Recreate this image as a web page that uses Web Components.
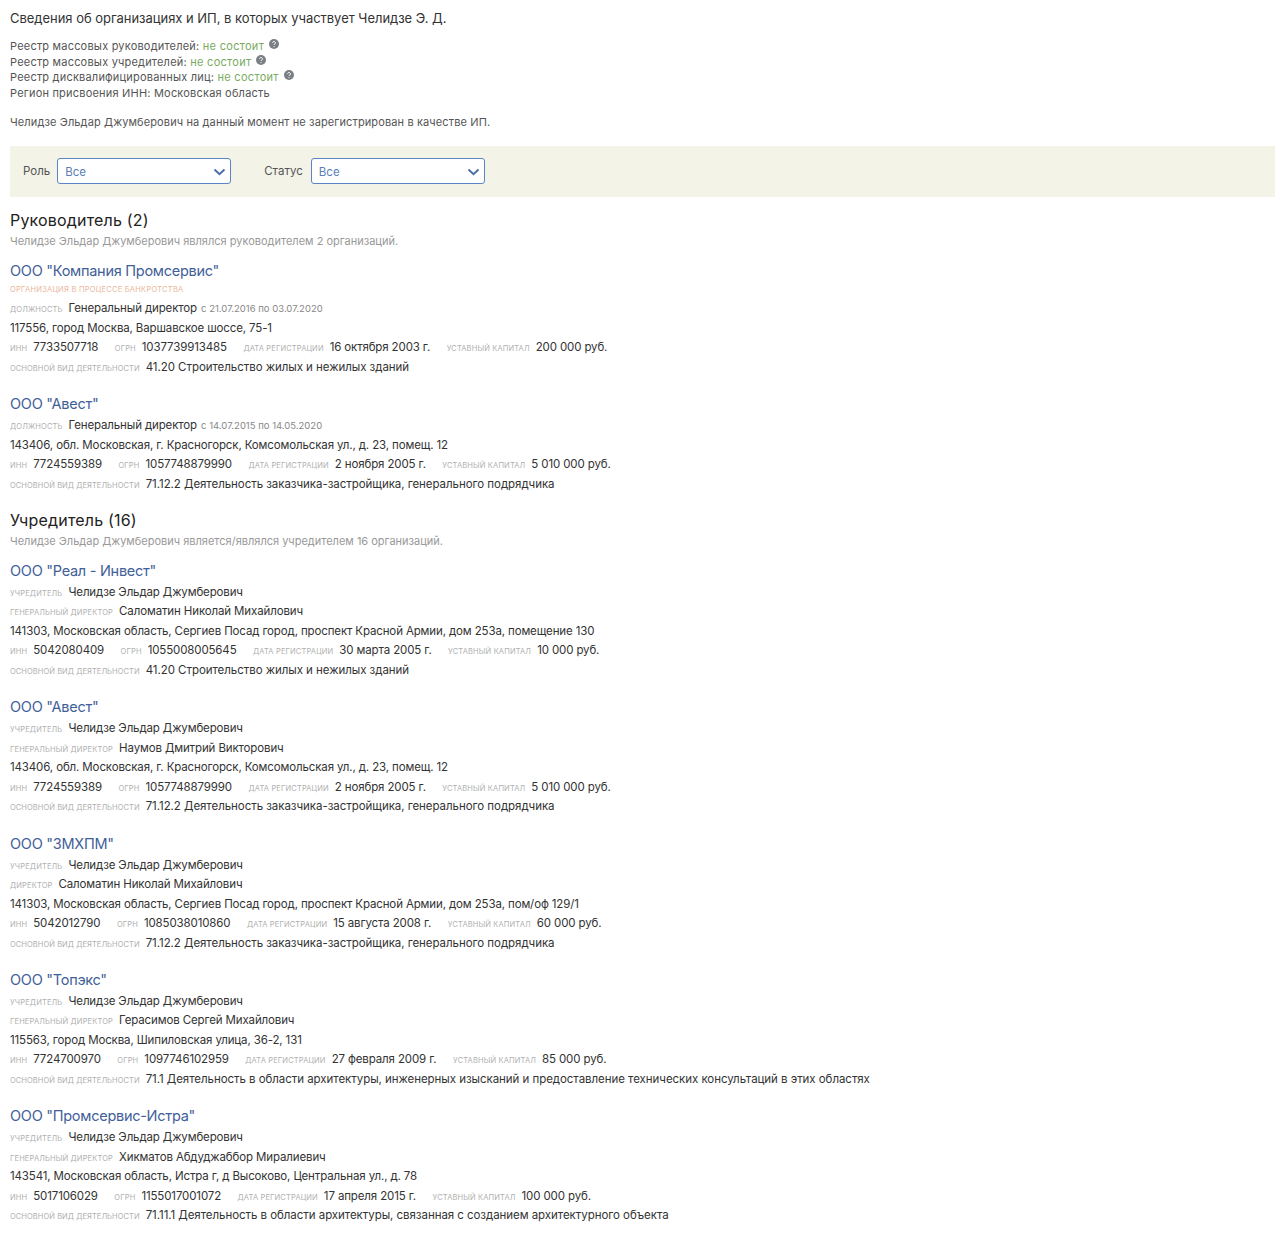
<!DOCTYPE html>
<html lang="ru"><head><meta charset="utf-8"><title>Челидзе</title>
<style>
html,body{margin:0;background:#fff}
body{font:12px/19.5px Inter,Roboto,"Liberation Sans",sans-serif;color:#333}
</style></head><body>
<template id="t-page"><style>
:host{display:block;padding:10px 5px 0 10px}
</style><slot></slot></template>
<template id="t-title"><style>
:host{display:block;font-size:13px;line-height:16px;height:16px;color:#333;letter-spacing:-.03px}
</style><slot></slot></template>
<template id="t-info"><style>
:host{display:block;margin-top:13px;font-size:11px;line-height:15.6px;color:#555;letter-spacing:.2px}
</style><slot></slot></template>
<template id="t-yes"><style>
:host{color:#7aab62;letter-spacing:.3px}
svg{display:inline-block;width:10px;height:10px;margin-left:5px;vertical-align:1px}
</style><slot></slot><svg viewBox="0 0 10 10"><circle cx="5" cy="5" r="5" fill="#7b7f86"/><path d="M3.6 3.9a1.4 1.4 0 1 1 2.2 1.1c-.5.3-.8.5-.8 1M5 7.2v.9" fill="none" stroke="#fff" stroke-width="1"/></svg></template>
<template id="t-note"><style>
:host{display:block;margin-top:14px;font-size:11px;line-height:15px;color:#555;letter-spacing:.12px}
</style><slot></slot></template>
<template id="t-filters"><style>
:host{display:flex;align-items:center;gap:33px;height:50px;padding-bottom:1px;margin-top:16px;padding-left:13px;background:#f3f3e8}
</style><slot></slot></template>
<template id="t-select"><style>
:host{display:flex;align-items:center;gap:var(--g,7px);font-size:11.5px;color:#555}
.box{box-sizing:border-box;width:174px;height:26px;display:flex;align-items:center;justify-content:space-between;padding:2px 4px 0 7px;background:#fff;border:1px solid #5b84c4;border-radius:3px;color:#5b7fb8}
svg{width:13px;height:8px}
</style><span><slot name="label"></slot></span><div class="box"><slot></slot><svg viewBox="0 0 13 8"><path d="M1.5 1.5 6.5 6.2l5-4.7" fill="none" stroke="#4d6fa6" stroke-width="2"/></svg></div></template>
<template id="t-section"><style>
:host{display:block;margin-top:var(--top,12px)}
h2{margin:0;font-weight:400;font-size:16px;line-height:22px;color:#222;letter-spacing:.18px}
p{margin:0;font-size:11px;line-height:20px;color:#999;letter-spacing:0}
</style><h2><slot name="head"></slot></h2><p><slot name="sub"></slot></p><slot></slot></template>
<template id="t-org"><style>
:host{display:block;margin-top:7px;padding-bottom:6.8px}
.n{font-size:14.5px;line-height:25px;height:25px;color:#3f6098;letter-spacing:-.27px}
</style><div class="n"><slot name="name"></slot></div><slot></slot></template>
<template id="t-row"><style>
:host{display:flex;gap:16.5px;height:19.5px;line-height:19.5px;font-size:11.5px;color:#333;letter-spacing:-.13px;white-space:nowrap}
</style><slot></slot></template>
<template id="t-field"><style>
:host{display:inline-block}
:host([act]){letter-spacing:-.05px}
b{font-weight:400;font-size:7.5px;text-transform:uppercase;color:#b0b0b0;margin-right:6px;letter-spacing:.15px}
:host([act]) b{letter-spacing:.07px}
</style><b><slot name="k"></slot></b><slot></slot></template>
<template id="t-status"><style>
:host{display:block;height:16px;line-height:14.5px;font-size:7.5px;text-transform:uppercase;color:#ebb79d;letter-spacing:.25px}
</style><slot></slot></template>
<template id="t-dates"><style>
:host{font-size:9.5px;color:#888;margin-left:1px;letter-spacing:0}
</style><slot></slot></template>

<x-page>
<x-title>Сведения об организациях и ИП, в которых участвует Челидзе Э. Д.</x-title>
<x-info>Реестр массовых руководителей: <x-yes>не состоит</x-yes><br>Реестр массовых учредителей: <x-yes>не состоит</x-yes><br>Реестр дисквалифицированных лиц: <x-yes>не состоит</x-yes><br>Регион присвоения ИНН: Московская область</x-info>
<x-note>Челидзе Эльдар Джумберович на данный момент не зарегистрирован в качестве ИП.</x-note>
<x-filters><x-select><span slot="label">Роль</span>Все</x-select><x-select style="--g:8px"><span slot="label">Статус</span>Все</x-select></x-filters>

<x-section><span slot="head">Руководитель (2)</span><span slot="sub">Челидзе Эльдар Джумберович являлся руководителем 2 организаций.</span>
<x-org><span slot="name">ООО "Компания Промсервис"</span>
<x-status>Организация в процессе банкротства</x-status>
<x-row><x-field><span slot="k">должность</span>Генеральный директор <x-dates>с 21.07.2016 по 03.07.2020</x-dates></x-field></x-row>
<x-row>117556, город Москва, Варшавское шоссе, 75-1</x-row>
<x-row><x-field><span slot="k">ИНН</span>7733507718</x-field><x-field><span slot="k">ОГРН</span>1037739913485</x-field><x-field><span slot="k">Дата регистрации</span>16 октября 2003 г.</x-field><x-field><span slot="k">Уставный капитал</span>200 000 руб.</x-field></x-row>
<x-row><x-field act><span slot="k">Основной вид деятельности</span>41.20 Строительство жилых и нежилых зданий</x-field></x-row>
</x-org>
<x-org><span slot="name">ООО "Авест"</span>
<x-row><x-field><span slot="k">должность</span>Генеральный директор <x-dates>с 14.07.2015 по 14.05.2020</x-dates></x-field></x-row>
<x-row>143406, обл. Московская, г. Красногорск, Комсомольская ул., д. 23, помещ. 12</x-row>
<x-row><x-field><span slot="k">ИНН</span>7724559389</x-field><x-field><span slot="k">ОГРН</span>1057748879990</x-field><x-field><span slot="k">Дата регистрации</span>2 ноября 2005 г.</x-field><x-field><span slot="k">Уставный капитал</span>5 010 000 руб.</x-field></x-row>
<x-row><x-field act><span slot="k">Основной вид деятельности</span>71.12.2 Деятельность заказчика-застройщика, генерального подрядчика</x-field></x-row>
</x-org>
</x-section>

<x-section style="--top:8px"><span slot="head">Учредитель (16)</span><span slot="sub">Челидзе Эльдар Джумберович является/являлся учредителем 16 организаций.</span>
<x-org><span slot="name">ООО "Реал - Инвест"</span>
<x-row><x-field><span slot="k">Учредитель</span>Челидзе Эльдар Джумберович</x-field></x-row>
<x-row><x-field><span slot="k">Генеральный директор</span>Саломатин Николай Михайлович</x-field></x-row>
<x-row>141303, Московская область, Сергиев Посад город, проспект Красной Армии, дом 253а, помещение 130</x-row>
<x-row><x-field><span slot="k">ИНН</span>5042080409</x-field><x-field><span slot="k">ОГРН</span>1055008005645</x-field><x-field><span slot="k">Дата регистрации</span>30 марта 2005 г.</x-field><x-field><span slot="k">Уставный капитал</span>10 000 руб.</x-field></x-row>
<x-row><x-field act><span slot="k">Основной вид деятельности</span>41.20 Строительство жилых и нежилых зданий</x-field></x-row>
</x-org>
<x-org><span slot="name">ООО "Авест"</span>
<x-row><x-field><span slot="k">Учредитель</span>Челидзе Эльдар Джумберович</x-field></x-row>
<x-row><x-field><span slot="k">Генеральный директор</span>Наумов Дмитрий Викторович</x-field></x-row>
<x-row>143406, обл. Московская, г. Красногорск, Комсомольская ул., д. 23, помещ. 12</x-row>
<x-row><x-field><span slot="k">ИНН</span>7724559389</x-field><x-field><span slot="k">ОГРН</span>1057748879990</x-field><x-field><span slot="k">Дата регистрации</span>2 ноября 2005 г.</x-field><x-field><span slot="k">Уставный капитал</span>5 010 000 руб.</x-field></x-row>
<x-row><x-field act><span slot="k">Основной вид деятельности</span>71.12.2 Деятельность заказчика-застройщика, генерального подрядчика</x-field></x-row>
</x-org>
<x-org><span slot="name">ООО "ЗМХПМ"</span>
<x-row><x-field><span slot="k">Учредитель</span>Челидзе Эльдар Джумберович</x-field></x-row>
<x-row><x-field><span slot="k">Директор</span>Саломатин Николай Михайлович</x-field></x-row>
<x-row>141303, Московская область, Сергиев Посад город, проспект Красной Армии, дом 253а, пом/оф 129/1</x-row>
<x-row><x-field><span slot="k">ИНН</span>5042012790</x-field><x-field><span slot="k">ОГРН</span>1085038010860</x-field><x-field><span slot="k">Дата регистрации</span>15 августа 2008 г.</x-field><x-field><span slot="k">Уставный капитал</span>60 000 руб.</x-field></x-row>
<x-row><x-field act><span slot="k">Основной вид деятельности</span>71.12.2 Деятельность заказчика-застройщика, генерального подрядчика</x-field></x-row>
</x-org>
<x-org><span slot="name">ООО "Топэкс"</span>
<x-row><x-field><span slot="k">Учредитель</span>Челидзе Эльдар Джумберович</x-field></x-row>
<x-row><x-field><span slot="k">Генеральный директор</span>Герасимов Сергей Михайлович</x-field></x-row>
<x-row>115563, город Москва, Шипиловская улица, 36-2, 131</x-row>
<x-row><x-field><span slot="k">ИНН</span>7724700970</x-field><x-field><span slot="k">ОГРН</span>1097746102959</x-field><x-field><span slot="k">Дата регистрации</span>27 февраля 2009 г.</x-field><x-field><span slot="k">Уставный капитал</span>85 000 руб.</x-field></x-row>
<x-row><x-field act><span slot="k">Основной вид деятельности</span>71.1 Деятельность в области архитектуры, инженерных изысканий и предоставление технических консультаций в этих областях</x-field></x-row>
</x-org>
<x-org><span slot="name">ООО "Промсервис-Истра"</span>
<x-row><x-field><span slot="k">Учредитель</span>Челидзе Эльдар Джумберович</x-field></x-row>
<x-row><x-field><span slot="k">Генеральный директор</span>Хикматов Абдуджаббор Миралиевич</x-field></x-row>
<x-row>143541, Московская область, Истра г, д Высоково, Центральная ул., д. 78</x-row>
<x-row><x-field><span slot="k">ИНН</span>5017106029</x-field><x-field><span slot="k">ОГРН</span>1155017001072</x-field><x-field><span slot="k">Дата регистрации</span>17 апреля 2015 г.</x-field><x-field><span slot="k">Уставный капитал</span>100 000 руб.</x-field></x-row>
<x-row><x-field act><span slot="k">Основной вид деятельности</span>71.11.1 Деятельность в области архитектуры, связанная с созданием архитектурного объекта</x-field></x-row>
</x-org>
</x-section>
</x-page>
<script>
for (const n of ['page','title','info','yes','note','filters','select','section','org','row','field','status','dates']) {
  customElements.define('x-'+n, class extends HTMLElement {
    constructor(){super();this.attachShadow({mode:'open'}).appendChild(document.getElementById('t-'+n).content.cloneNode(true));}
  });
}
</script>
</body></html>
